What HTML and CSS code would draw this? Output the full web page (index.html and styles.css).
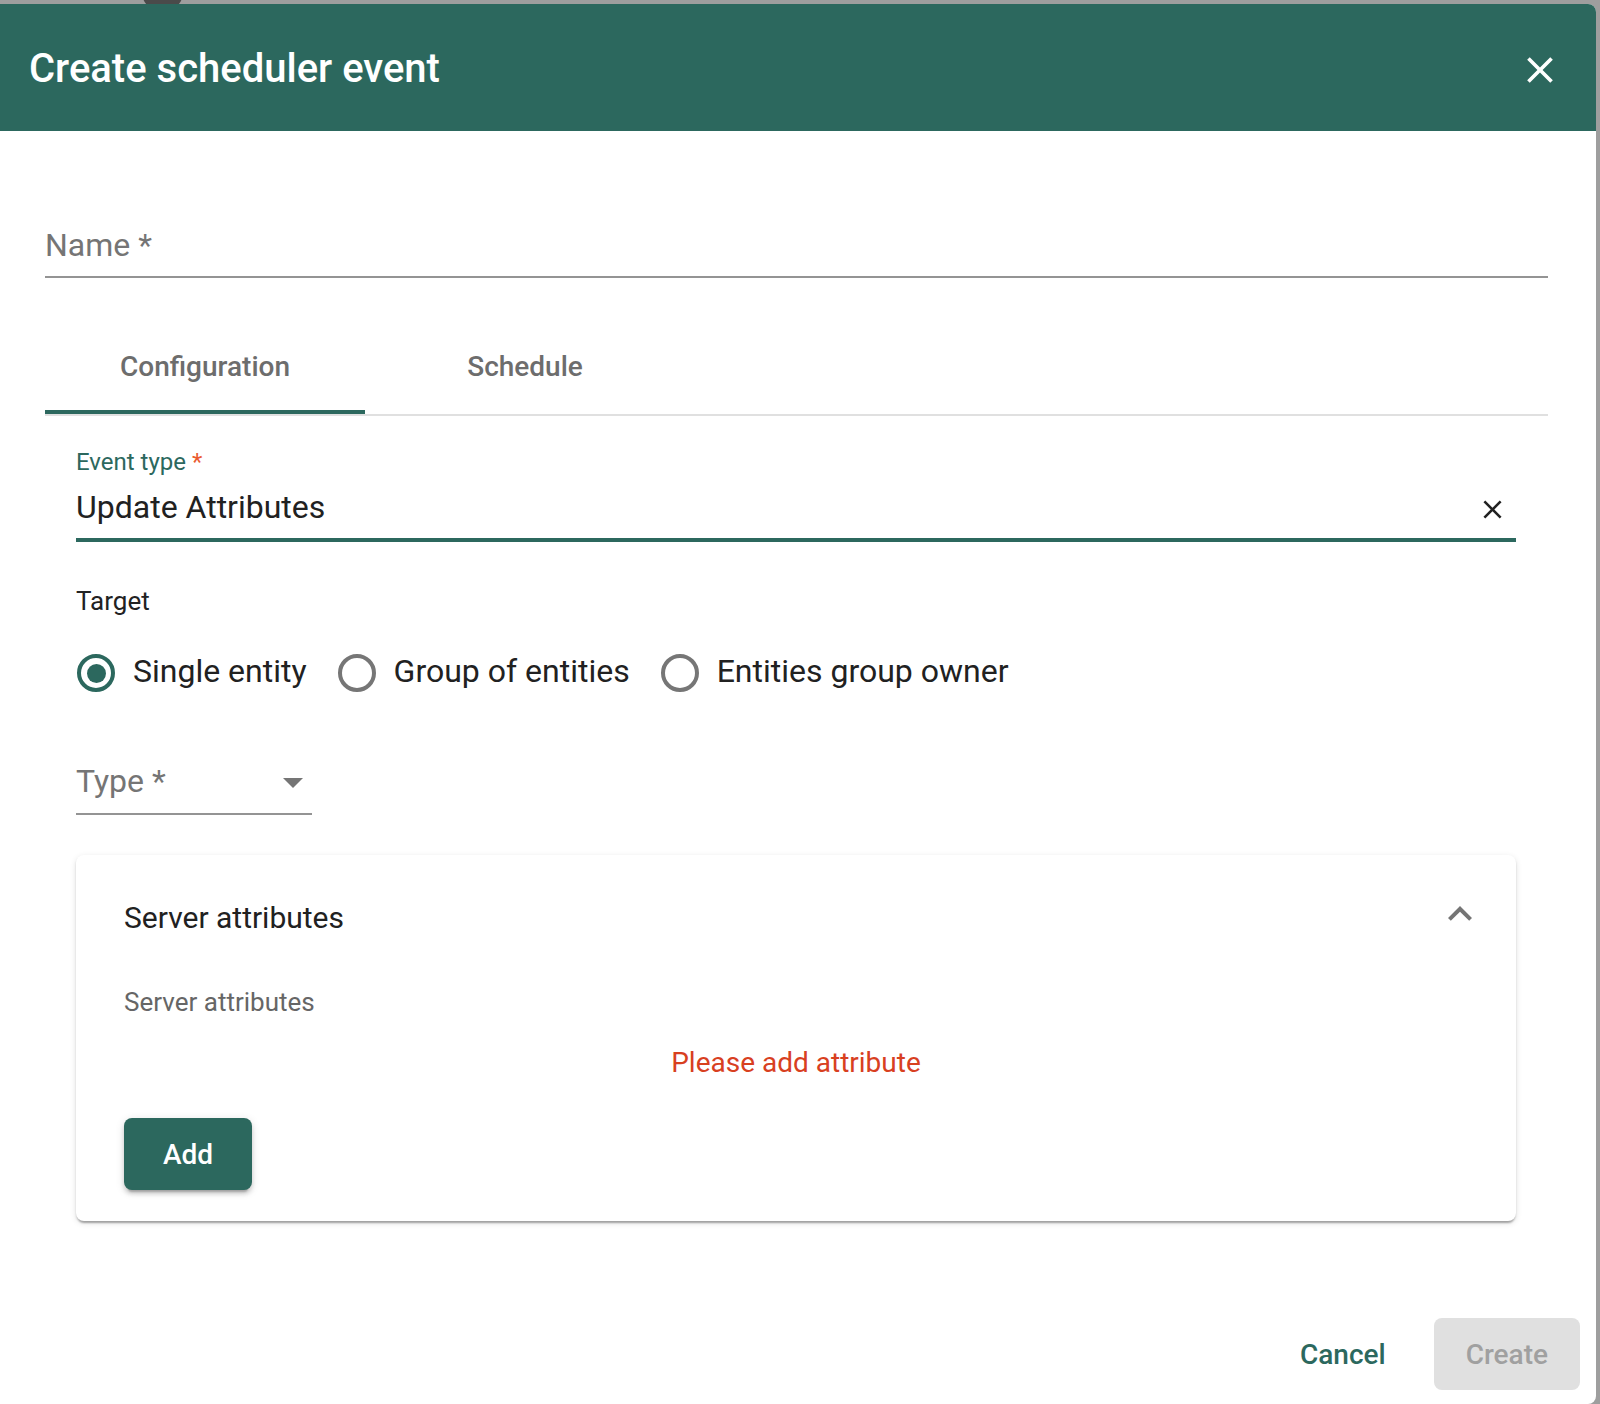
FILE: index.html
```html
<!DOCTYPE html>
<html lang="en">
<head>
<meta charset="utf-8">
<title>Create scheduler event</title>
<link rel="stylesheet" href="styles.css">
</head>
<body>
<div class="backdrop-blob"></div>
<div class="dialog">
  <div class="dialog-header">
    <h2 class="dialog-title">Create scheduler event</h2>
    <svg class="close-icon" viewBox="0 0 24 24" width="44" height="44"><path d="M19 6.41L17.59 5 12 10.59 6.41 5 5 6.41 10.59 12 5 17.59 6.41 19 12 13.41 17.59 19 19 17.59 13.41 12z" fill="#fff"/></svg>
  </div>

  <div class="dialog-content">
    <div class="name-field">
      <span class="placeholder">Name *</span>
    </div>

    <div class="tabs">
      <div class="tab active">Configuration</div>
      <div class="tab">Schedule</div>
    </div>

    <div class="tab-body">
      <div class="event-field">
        <div class="float-label">Event type <span class="req">*</span></div>
        <div class="value-row">
          <span class="value">Update Attributes</span>
          <svg class="clear-icon" viewBox="0 0 24 24" width="31" height="31"><path d="M19 6.41L17.59 5 12 10.59 6.41 5 5 6.41 10.59 12 5 17.59 6.41 19 12 13.41 17.59 19 19 17.59 13.41 12z" fill="#212121"/></svg>
        </div>
      </div>

      <div class="target-label">Target</div>
      <div class="radio-group">
        <div class="radio checked"><span class="radio-circle"></span><span class="radio-text">Single entity</span></div>
        <div class="radio"><span class="radio-circle"></span><span class="radio-text">Group of entities</span></div>
        <div class="radio"><span class="radio-circle"></span><span class="radio-text">Entities group owner</span></div>
      </div>

      <div class="type-select">
        <span class="placeholder">Type *</span>
        <span class="select-arrow"></span>
      </div>

      <div class="panel">
        <div class="panel-header">
          <span class="panel-title">Server attributes</span>
          <svg class="chevron" viewBox="0 0 24 24" width="48" height="48"><path d="M12 8l-6 6 1.41 1.41L12 10.83l4.59 4.58L18 14z" fill="#757575"/></svg>
        </div>
        <div class="panel-sub">Server attributes</div>
        <div class="panel-error">Please add attribute</div>
        <button class="btn-add">Add</button>
      </div>
    </div>
  </div>

  <div class="dialog-actions">
    <button class="btn-cancel">Cancel</button>
    <button class="btn-create" disabled>Create</button>
  </div>
</div>
</body>
</html>
```

FILE: styles.css
```css
* { box-sizing: border-box; }

html, body {
  margin: 0;
  padding: 0;
}

body {
  width: 1600px;
  height: 1404px;
  overflow: hidden;
  background: #9e9e9e;
  font-family: Roboto, "Noto Sans", "Liberation Sans", sans-serif;
  color: #212121;
  position: relative;
}

.backdrop-blob {
  position: absolute;
  left: 143px;
  top: -16px;
  width: 39px;
  height: 24px;
  border-radius: 12px;
  background: #4a4a4a;
}

.dialog {
  position: relative;
  z-index: 1;
  margin-top: 4px;
  width: 1596px;
  height: 1400px;
  background: #fff;
  border-radius: 0 8px 8px 0;
  display: flex;
  flex-direction: column;
}

.dialog-header {
  height: 127px;
  background: #2c685e;
  border-top-right-radius: 8px;
  display: flex;
  align-items: center;
  justify-content: space-between;
  padding: 0 34px 0 29px;
}

.dialog-title {
  margin: 2px 0 0;
  font-size: 40px;
  line-height: 48px;
  font-weight: 500;
  color: #fff;
}

.close-icon {
  display: block;
  margin-top: 5px;
}

.dialog-content {
  padding: 0 48px 0 45px;
}

.placeholder {
  color: #757575;
  font-size: 32px;
  line-height: 40px;
}

.name-field {
  margin-top: 94px;
  padding-bottom: 11px;
  border-bottom: 2px solid #949494;
  height: 53px;
}

.tabs {
  margin-top: 40px;
  display: flex;
  border-bottom: 2px solid #e0e0e0;
}

.tab {
  width: 320px;
  height: 96px;
  display: flex;
  align-items: center;
  justify-content: center;
  font-size: 28px;
  font-weight: 500;
  color: #6d6d6d;
}

.tab.active {
  box-shadow: inset 0 -4px 0 #2c685e;
}

.tab-body {
  padding: 0 32px 0 31px;
}

.event-field {
  padding-top: 32px;
  padding-bottom: 11px;
  border-bottom: 4px solid #2c685e;
}

.float-label {
  font-size: 24px;
  line-height: 28px;
  color: #2c685e;
}

.req {
  color: #ea5a30;
}

.value-row {
  margin-top: 11px;
  display: flex;
  align-items: flex-start;
  justify-content: space-between;
}

.value {
  font-size: 32px;
  line-height: 40px;
  color: #212121;
}

.clear-icon {
  display: block;
  margin-top: 7px;
  margin-right: 8px;
}

.target-label {
  margin-top: 43px;
  font-size: 26px;
  line-height: 32px;
  color: #222;
}

.radio-group {
  margin-top: 34px;
  display: flex;
  gap: 31px;
  padding-left: 1px;
}

.radio {
  display: flex;
  align-items: flex-start;
}

.radio-circle {
  width: 38px;
  height: 38px;
  margin-top: 3px;
  margin-right: 18px;
  border: 4px solid #767676;
  border-radius: 50%;
  display: flex;
  align-items: center;
  justify-content: center;
}

.radio.checked .radio-circle {
  border-color: #2c685e;
}

.radio.checked .radio-circle::after {
  content: "";
  width: 19px;
  height: 19px;
  border-radius: 50%;
  background: #2c685e;
}

.radio-text {
  font-size: 32px;
  line-height: 40px;
  color: #212121;
}

.type-select {
  margin-top: 69px;
  width: 236px;
  padding-bottom: 12px;
  border-bottom: 2px solid #949494;
  display: flex;
  align-items: center;
  justify-content: space-between;
}

.select-arrow {
  width: 0;
  height: 0;
  margin-right: 9px;
  margin-top: 3px;
  border-left: 10px solid transparent;
  border-right: 10px solid transparent;
  border-top: 10px solid #757575;
}

.panel {
  margin-top: 40px;
  border-radius: 8px;
  background: #fff;
  box-shadow: 0 4px 2px -2px rgba(0,0,0,0.2), 0 2px 2px 0 rgba(0,0,0,0.14), 0 2px 6px 0 rgba(0,0,0,0.12);
  padding: 45px 32px 31px 48px;
}

.panel-header {
  display: flex;
  align-items: flex-start;
  justify-content: space-between;
}

.panel-title {
  font-size: 30px;
  line-height: 36px;
  color: #212121;
}

.chevron {
  display: block;
  margin-top: -10px;
}

.panel-sub {
  margin-top: 48px;
  font-size: 26px;
  line-height: 32px;
  color: #666;
}

.panel-error {
  margin-top: 29px;
  font-size: 28px;
  line-height: 32px;
  color: #d8401f;
  text-align: center;
  padding-right: 16px;
}

.btn-add {
  margin-top: 39px;
  min-width: 128px;
  height: 72px;
  padding: 0 32px;
  border: none;
  border-radius: 8px;
  background: #2c685e;
  color: #fff;
  font-family: inherit;
  font-size: 28px;
  font-weight: 500;
  box-shadow: 0 6px 2px -4px rgba(0,0,0,0.2), 0 4px 4px 0 rgba(0,0,0,0.14), 0 2px 10px 0 rgba(0,0,0,0.12);
}

.dialog-actions {
  margin-top: auto;
  display: flex;
  justify-content: flex-end;
  align-items: center;
  gap: 16px;
  padding: 0 16px 14px 0;
}

.btn-cancel,
.btn-create {
  height: 72px;
  padding: 0 32px;
  border: none;
  border-radius: 8px;
  font-family: inherit;
  font-size: 28px;
  font-weight: 500;
}

.btn-cancel {
  background: transparent;
  color: #2c685e;
}

.btn-create {
  background: #e0e0e0;
  color: #a0a0a0;
  min-width: 146px;
}
```
